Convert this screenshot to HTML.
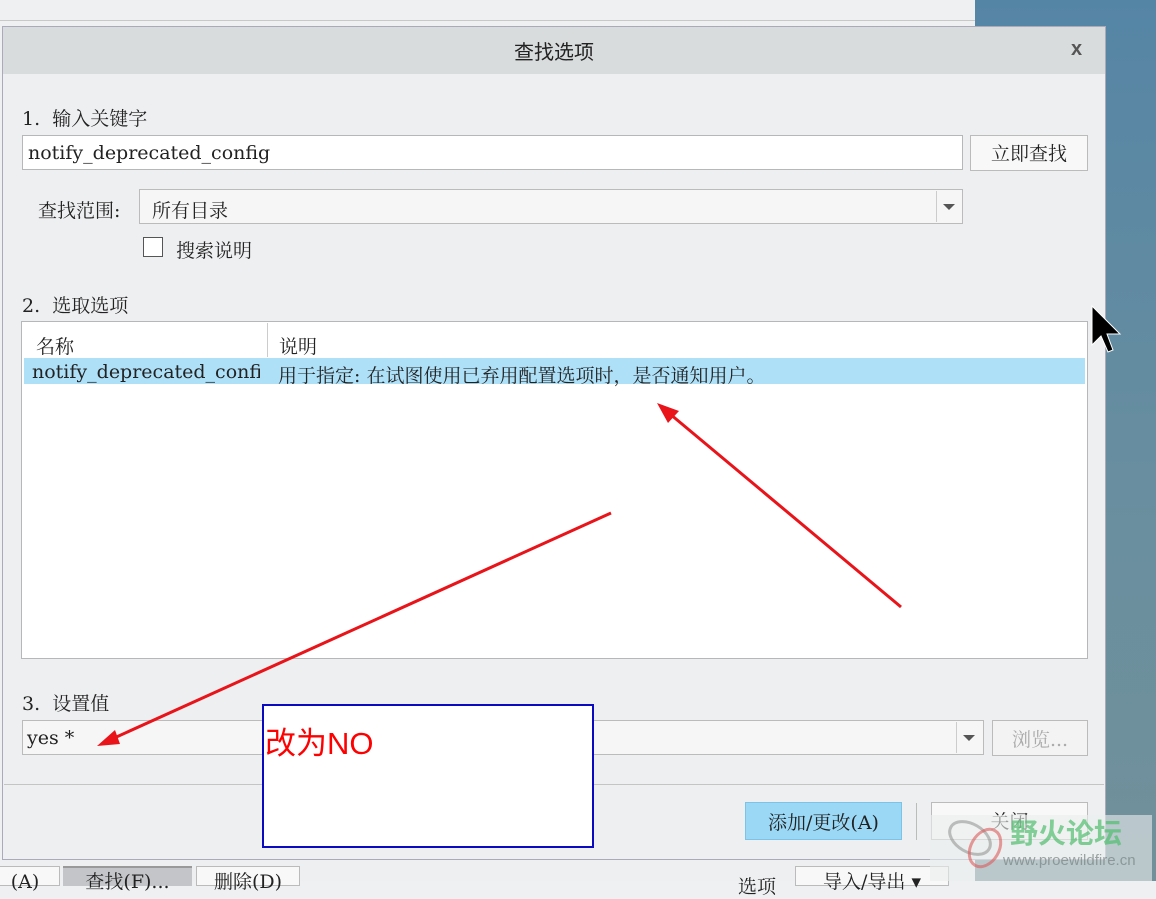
<!DOCTYPE html>
<html><head><meta charset="utf-8"><style>
*{margin:0;padding:0;box-sizing:border-box}
body{width:1156px;height:881px;overflow:hidden;position:relative;background:#eef0f2;font-family:"DejaVu Serif","Noto Serif CJK SC",serif;font-size:19px;color:#222}
.a{position:absolute}
.right{left:975px;top:0;width:181px;height:881px;background:linear-gradient(#5585a5,#6a8f9f 60%,#71909a)}
.dlg{left:2px;top:26px;width:1104px;height:834px;background:#eeeff1;border:1px solid #aab}
.title{left:3px;top:27px;width:1102px;height:47px;background:#d9dcdd;text-align:center;line-height:52px;font-family:"Liberation Sans","Noto Sans CJK SC",sans-serif;font-size:20px}
.in{background:#fff;border:1px solid #b5b7b9}
.btn{background:#f8f8f8;border:1px solid #bbb;text-align:center}
.t{white-space:nowrap}
</style></head><body>
<div class="a right"></div>
<div class="a" style="left:0;top:20px;width:975px;height:1px;background:#c8c8c8"></div>
<div class="a dlg"></div>
<div class="a title">查找选项</div>
<div class="a t" style="left:1071px;top:38px;font-family:'Liberation Sans',sans-serif;font-weight:bold;font-size:20px;color:#555">x</div>
<div class="a t" style="left:22px;top:104px">1.&nbsp; 输入关键字</div>
<div class="a in t" style="left:22px;top:135px;width:941px;height:35px;padding:6px 5px">notify_deprecated_config</div>
<div class="a btn t" style="left:970px;top:135px;width:118px;height:36px;line-height:36px">立即查找</div>
<div class="a t" style="left:38px;top:196px">查找范围:</div>
<div class="a t" style="left:139px;top:189px;width:824px;height:35px;background:#f6f6f6;border:1px solid #bbb;padding:6px 12px">所有目录</div>
<div class="a" style="left:936px;top:191px;width:1px;height:31px;background:#ccc"></div>
<div class="a" style="left:943px;top:204px;border-left:6px solid transparent;border-right:6px solid transparent;border-top:6px solid #555"></div>
<div class="a" style="left:143px;top:237px;width:20px;height:20px;border:1px solid #555;background:#fff"></div>
<div class="a t" style="left:176px;top:236px">搜索说明</div>
<div class="a t" style="left:22px;top:291px">2.&nbsp; 选取选项</div>
<div class="a in" style="left:21px;top:321px;width:1067px;height:338px"></div>
<div class="a" style="left:267px;top:323px;width:1px;height:34px;background:#ccc"></div>
<div class="a t" style="left:36px;top:332px">名称</div>
<div class="a t" style="left:279px;top:332px">说明</div>
<div class="a" style="left:24px;top:358px;width:1061px;height:26px;background:#aee0f8"></div>
<div class="a t" style="left:32px;top:361px;width:228px;overflow:hidden">notify_deprecated_config</div>
<div class="a t" style="left:278px;top:361px">用于指定: 在试图使用已弃用配置选项时，是否通知用户。</div>
<div class="a t" style="left:22px;top:689px">3.&nbsp; 设置值</div>
<div class="a t" style="left:22px;top:720px;width:962px;height:35px;background:#f6f6f6;border:1px solid #bbb;padding:6px 4px">yes *</div>
<div class="a" style="left:956px;top:722px;width:1px;height:31px;background:#ccc"></div>
<div class="a" style="left:963px;top:735px;border-left:6px solid transparent;border-right:6px solid transparent;border-top:6px solid #555"></div>
<div class="a btn t" style="left:992px;top:720px;width:96px;height:36px;line-height:38px;color:#aaa;background:#f3f3f3">浏览...</div>
<div class="a" style="left:4px;top:784px;width:1100px;height:1px;background:#c4c4c4"></div>
<div class="a t" style="left:745px;top:802px;width:157px;height:38px;line-height:40px;text-align:center;background:#9ad8f5;border:1px solid #7cc3e6">添加/更改(A)</div>
<div class="a" style="left:916px;top:803px;width:1px;height:37px;background:#bbb"></div>
<div class="a btn t" style="left:931px;top:802px;width:157px;height:38px;line-height:38px">关闭</div>
<div class="a" style="left:0;top:860px;width:975px;height:21px;background:#eeeff1"></div>
<div class="a btn t" style="left:-10px;top:866px;width:70px;height:20px;line-height:30px">(A)</div>
<div class="a t" style="left:63px;top:866px;width:129px;height:20px;background:#c4c5c8;border-top:2px solid #999;text-align:center;line-height:28px">查找(F)...</div>
<div class="a btn t" style="left:196px;top:866px;width:104px;height:20px;line-height:30px">删除(D)</div>
<div class="a t" style="left:738px;top:872px">选项</div>
<div class="a btn t" style="left:795px;top:866px;width:154px;height:20px;line-height:30px">导入/导出 ▾</div>
<div class="a" style="left:262px;top:704px;width:332px;height:144px;background:#fff;border:2px solid #0a0ac0"></div>
<div class="a t" style="left:265px;top:718px;font-family:'Liberation Sans','Noto Sans CJK SC',sans-serif;font-size:31px;color:#f00">改为NO</div>
<div class="a" style="left:930px;top:815px;width:222px;height:66px;background:rgba(235,238,238,.6)"></div>
<div class="a t" style="left:1010px;top:812px;font-family:'Noto Sans CJK SC',sans-serif;font-weight:bold;font-size:28px;color:rgba(80,190,110,.7)">野火论坛</div>
<div class="a t" style="left:1003px;top:852px;font-family:'Liberation Sans',sans-serif;font-size:15px;color:rgba(120,130,130,.7)">www.proewildfire.cn</div>
<svg class="a" style="left:0;top:0" width="1156" height="881">
<line x1="611" y1="513" x2="112" y2="739" stroke="#e8141a" stroke-width="3"/>
<polygon points="97,746 115,730 120,744" fill="#e8141a"/>
<line x1="901" y1="607" x2="670" y2="414" stroke="#e8141a" stroke-width="3"/>
<polygon points="657,403 679,411 668,423" fill="#e8141a"/>
<path d="M1092,306 L1092,345 L1101,336 L1108,352 L1113,350 L1107,334 L1120,334 Z" fill="#000" stroke="#fff" stroke-width="1"/>
<ellipse cx="970" cy="838" rx="22" ry="14" fill="none" stroke="rgba(150,150,150,.6)" stroke-width="3" transform="rotate(30 970 838)"/>
<ellipse cx="985" cy="848" rx="14" ry="20" fill="none" stroke="rgba(220,90,90,.6)" stroke-width="3" transform="rotate(30 985 848)"/>
</svg>
</body></html>
